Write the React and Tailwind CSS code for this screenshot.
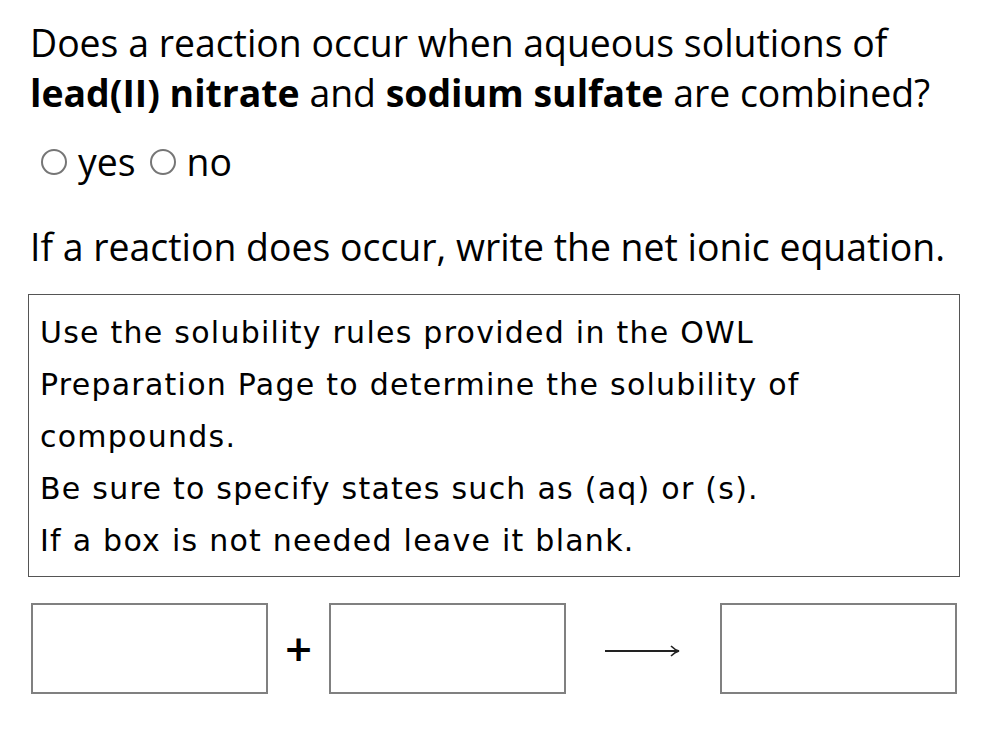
import React from "react";

function Radio() {
  return <span className="inline-block w-[26px] h-[26px] rounded-full border-2 border-[#767676] bg-white" />;
}

export default function App() {
  return (
    <div className="bg-white w-[992px] h-[732px] text-black">
      <div className="pl-[30px] pr-[30px] pt-[18px] font-['Open_Sans',sans-serif] text-[37.4px] leading-[50px]">
        <p>
          Does a reaction occur when aqueous solutions of<br /><b>lead(II) nitrate</b> and <b>sodium sulfate</b> are combined?
        </p>
        <div className="flex items-center mt-[19px] pl-[11px]">
          <Radio />
          <span className="ml-[11px]">yes</span>
          <span className="ml-[14px] flex items-center"><Radio /></span>
          <span className="ml-[11px]">no</span>
        </div>
        <p className="mt-[35px]">If a reaction does occur, write the net ionic equation.</p>
      </div>
      <div className="ml-[28px] mt-[22px] w-[932px] border-[1.5px] border-[#555] pl-[11px] pt-[12px] pb-[9px] font-['DejaVu_Sans',sans-serif] text-[30px] tracking-[1.25px] leading-[52px]">
        <div>Use the solubility rules provided in the OWL<br />Preparation Page to determine the solubility of<br />compounds.</div>
        <div>Be sure to specify states such as (aq) or (s).</div>
        <div>If a box is not needed leave it blank.</div>
      </div>
      <div className="flex items-center ml-[31px] mt-[26px]">
        <div className="w-[237px] h-[91px] border-[2px] border-[#808080]" />
        <span className="w-[61px] text-center font-['DejaVu_Sans',sans-serif] font-bold text-[36px] leading-none">+</span>
        <div className="w-[237px] h-[91px] border-[2px] border-[#808080]" />
        <div className="w-[154px] flex justify-center pt-[5px]">
          <svg width="76" height="14" viewBox="0 0 76 14">
            <line x1="0" y1="7" x2="74" y2="7" stroke="#222" strokeWidth="2" />
            <path d="M66 2 Q70 6 74 7 Q70 8 66 12" stroke="#222" strokeWidth="1.6" fill="none" />
          </svg>
        </div>
        <div className="w-[237px] h-[91px] border-[2px] border-[#808080]" />
      </div>
    </div>
  );
}
